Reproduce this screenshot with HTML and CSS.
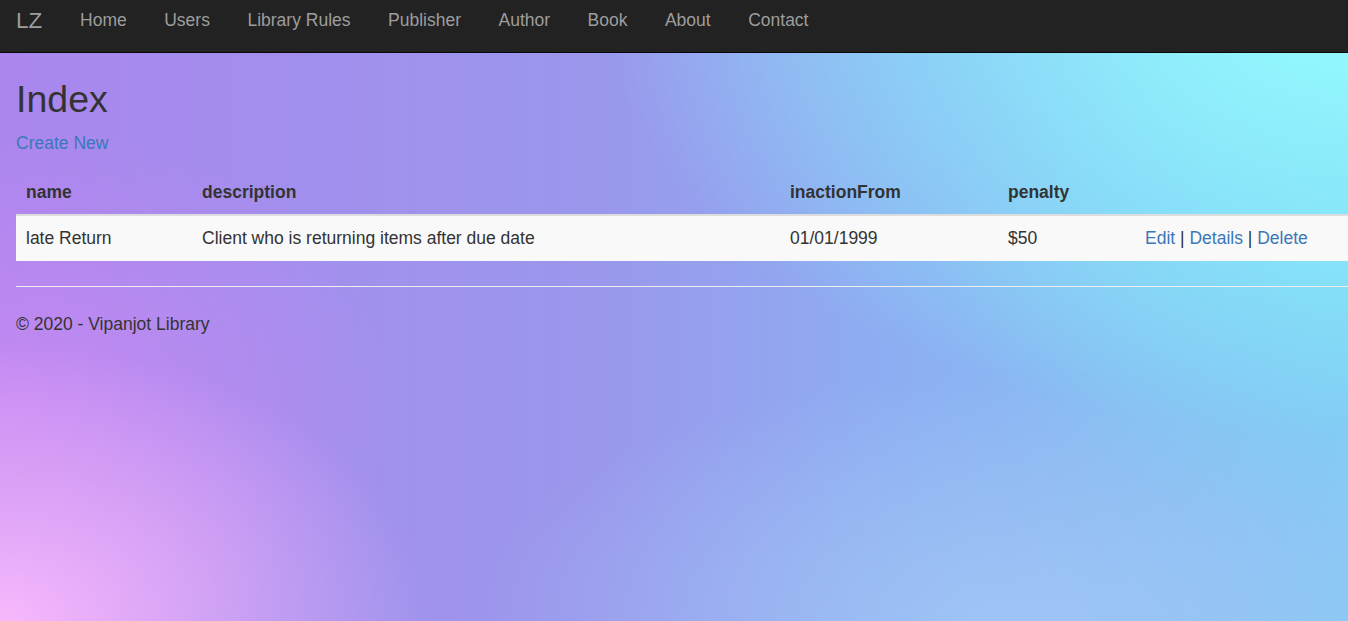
FILE: index.html
```html
<!DOCTYPE html>
<html lang="en">
<head>
<meta charset="utf-8">
<title>Index - Library Rules</title>
<link rel="stylesheet" href="styles.css">
</head>
<body>
<nav class="navbar">
  <a class="brand" href="#">LZ</a>
  <ul class="nav">
    <li><a href="#">Home</a></li>
    <li><a href="#">Users</a></li>
    <li><a href="#">Library Rules</a></li>
    <li><a href="#">Publisher</a></li>
    <li><a href="#">Author</a></li>
    <li><a href="#">Book</a></li>
    <li><a href="#">About</a></li>
    <li><a href="#">Contact</a></li>
  </ul>
</nav>
<main class="body-content">
  <h2 class="title">Index</h2>
  <p class="create"><a href="#">Create New</a></p>
  <table class="table">
    <colgroup>
      <col class="c1"><col class="c2"><col class="c3"><col class="c4"><col class="c5">
    </colgroup>
    <thead>
      <tr>
        <th>name</th>
        <th>description</th>
        <th>inactionFrom</th>
        <th>penalty</th>
        <th></th>
      </tr>
    </thead>
    <tbody>
      <tr>
        <td>late Return</td>
        <td>Client who is returning items after due date</td>
        <td>01/01/1999</td>
        <td>$50</td>
        <td><a href="#">Edit</a> | <a href="#">Details</a> | <a href="#">Delete</a></td>
      </tr>
    </tbody>
  </table>
  <hr class="rule">
  <footer class="footer">
    <p>&copy; 2020 - Vipanjot Library</p>
  </footer>
</main>
</body>
</html>
```

FILE: styles.css
```css
html, body {
  margin: 0;
  padding: 0;
  overflow: hidden;
}

body {
  min-height: 100vh;
  font-family: "Liberation Sans", Arial, sans-serif;
  font-size: 17.5px;
  line-height: 25px;
  color: #333;
  background-color: #98a0ec;
  background-image:
    radial-gradient(ellipse 55% 70% at 100% 0%, rgba(150, 255, 255, 1) 0%, rgba(140, 245, 252, 0.5) 55%, rgba(150, 255, 255, 0) 100%),
    radial-gradient(ellipse 30% 45% at 100% 40%, rgba(124, 220, 246, 0.6) 0%, rgba(124, 220, 246, 0) 100%),
    radial-gradient(ellipse 32% 45% at 0% 100%, rgba(248, 184, 252, 1) 0%, rgba(248, 184, 252, 0) 100%),
    radial-gradient(ellipse 30% 45% at 0% 65%, rgba(208, 138, 244, 0.7) 0%, rgba(208, 138, 244, 0) 100%),
    radial-gradient(ellipse 40% 40% at 75% 100%, rgba(164, 200, 246, 0.8) 0%, rgba(164, 200, 246, 0) 100%),
    linear-gradient(to right, #aa86ee 0%, #9a98ec 45%, #8cb0f2 68%, #84c8f4 100%);
}

a {
  color: #3a78b8;
  text-decoration: none;
}

.navbar {
  display: flex;
  align-items: flex-start;
  height: 52px;
  background: #222;
  border-bottom: 1px solid #080808;
}

.brand {
  display: block;
  padding: 7px 16px 0 16px;
  font-size: 22.5px;
  line-height: 27px;
  color: #9d9d9d;
}

.nav {
  display: flex;
  margin: 0;
  padding: 0 0 0 3px;
  list-style: none;
}

.nav a {
  display: block;
  padding: 8px 18.75px 0 18.75px;
  line-height: 25px;
  color: #9d9d9d;
}

.body-content {
  padding: 0 0 0 16px;
}

.title {
  margin: 26px 0 11px 0;
  font-size: 37.5px;
  line-height: 41px;
  font-weight: 500;
  color: #333;
}

.create {
  margin: 0 0 12.5px 0;
}

.table {
  width: 100%;
  border-collapse: collapse;
  border-spacing: 0;
  table-layout: fixed;
  margin-bottom: 25px;
}

.c1 { width: 176px; }
.c2 { width: 588px; }
.c3 { width: 218px; }
.c4 { width: 137px; }

.table th,
.table td {
  padding: 10px;
  text-align: left;
  vertical-align: top;
  line-height: 25px;
}

.table th {
  padding-top: 11px;
  padding-bottom: 9px;
  font-weight: bold;
  border-bottom: 2px solid #ddd;
}

.table tbody tr {
  background: #f9f9f9;
}

.rule {
  margin: 25px 0 25px 0;
  border: 0;
  border-top: 1px solid #eee;
  height: 0;
}

.footer p {
  margin: 0;
}
```
